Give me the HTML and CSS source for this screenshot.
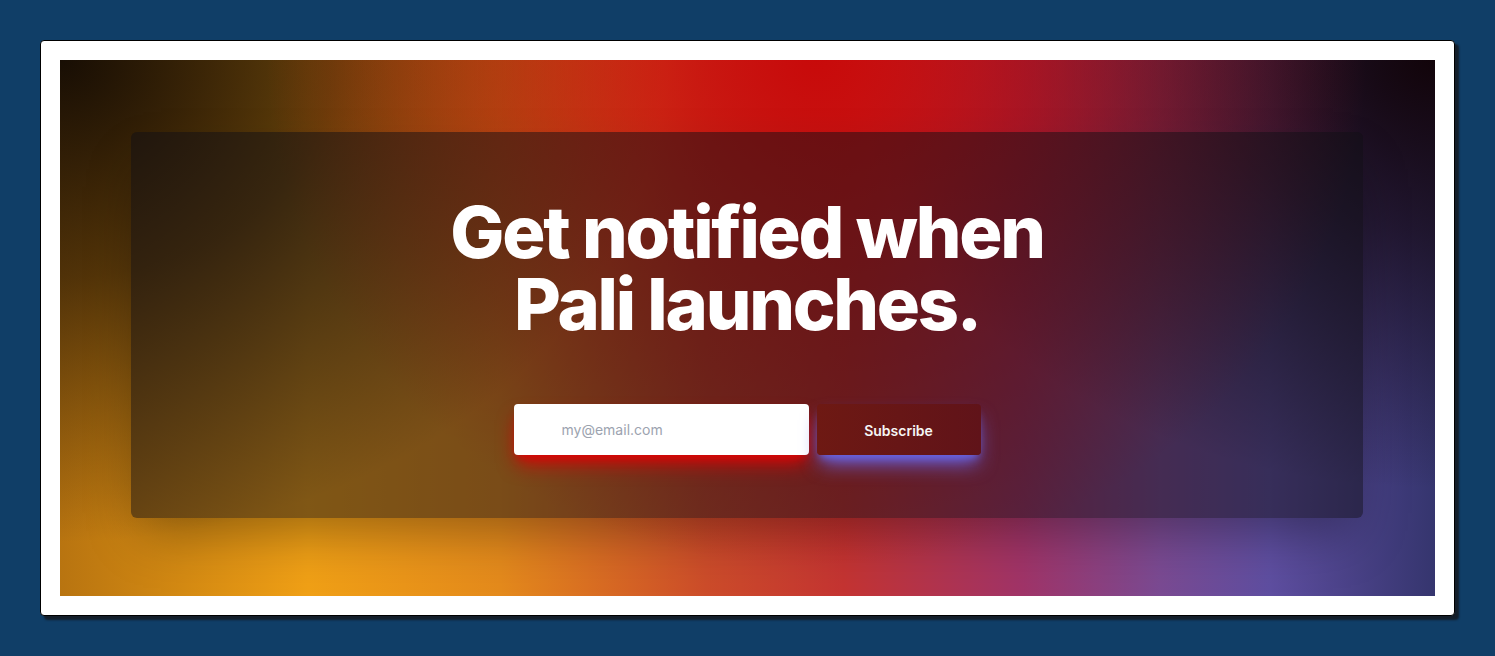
FILE: index.html
```html
<!DOCTYPE html>
<html lang="en">
<head>
<meta charset="utf-8">
<title>Get notified when Pali launches</title>
<link rel="stylesheet" href="styles.css">
</head>
<body>
  <div class="frame">
    <section class="hero">
      <div class="panel">
        <h1 class="title"><span class="line">Get notified when</span><span class="line">Pali launches.</span></h1>
        <form class="signup" onsubmit="return false">
          <input class="email" type="email" placeholder="my@email.com" aria-label="Email address">
          <button class="subscribe" type="submit">Subscribe</button>
        </form>
      </div>
    </section>
  </div>
</body>
</html>
```

FILE: styles.css
```css
* { box-sizing: border-box; }

html, body { height: 100%; }

body {
  margin: 0;
  padding: 40px;
  background: #103e67;
  font-family: Inter, "Noto Sans", sans-serif;
}

.frame {
  background: #ffffff;
  border: 1px solid #000;
  border-radius: 4px;
  padding: 19px;
  box-shadow: 4px 4px 2px rgba(20, 22, 28, 0.8);
}

.hero {
  height: 536px;
  padding: 72px 72px 78px 71px;
  background:
    radial-gradient(ellipse 40% 95% at 55% 0%, rgba(200, 10, 10, 1) 0%, rgba(200, 10, 10, 0.6) 40%, rgba(200, 10, 10, 0) 100%),
    radial-gradient(ellipse 44% 90% at 0% 0%, rgba(24, 14, 4, 1) 0%, rgba(24, 14, 4, 0.65) 45%, rgba(24, 14, 4, 0) 100%),
    radial-gradient(ellipse 42% 80% at 100% 0%, rgba(18, 4, 10, 1) 0%, rgba(18, 4, 10, 0.65) 40%, rgba(18, 4, 10, 0) 100%),
    linear-gradient(to right, #b87410 0%, #f0a016 18%, #e48a1c 32%, #cc4c2a 47%, #c43432 57%, #a03468 70%, #7a4a92 80%, #5e4ea0 88%, #35356e 100%);
}

.panel {
  height: 100%;
  border-radius: 6px;
  background: rgba(16, 14, 20, 0.5);
  box-shadow: 0 25px 50px -12px rgba(0, 0, 0, 0.35);
  padding: 64px 0;
  display: flex;
  flex-direction: column;
  align-items: center;
}

.title {
  margin: 0;
  color: #ffffff;
  font-size: 72px;
  font-weight: 800;
  letter-spacing: -0.031em;
  text-align: center;
}

.line {
  display: block;
  height: 72px;
  line-height: 72px;
}

.signup {
  margin-top: 64px;
  display: flex;
  gap: 8px;
}

.email {
  width: 295px;
  height: 51px;
  border: 0;
  border-radius: 4px;
  padding: 0 16px 0 48px;
  background: #ffffff;
  font-family: Inter, "Noto Sans", sans-serif;
  font-size: 14px;
  color: #111827;
  outline: none;
  box-shadow: 0 12px 20px -4px rgb(215, 6, 6), 0 6px 8px -4px rgb(215, 6, 6);
}

.email::placeholder { color: #9ca3af; }

.subscribe {
  width: 164px;
  height: 51px;
  border: 0;
  border-radius: 4px;
  background: linear-gradient(to right, #6e1913, #601319);
  color: #f5f5f5;
  font-family: Inter, "Noto Sans", sans-serif;
  font-size: 14px;
  font-weight: 600;
  padding: 2px 0 0;
  box-shadow: 0 12px 20px -4px rgb(104, 100, 230), 0 6px 8px -4px rgb(104, 100, 230);
  cursor: pointer;
}
```
